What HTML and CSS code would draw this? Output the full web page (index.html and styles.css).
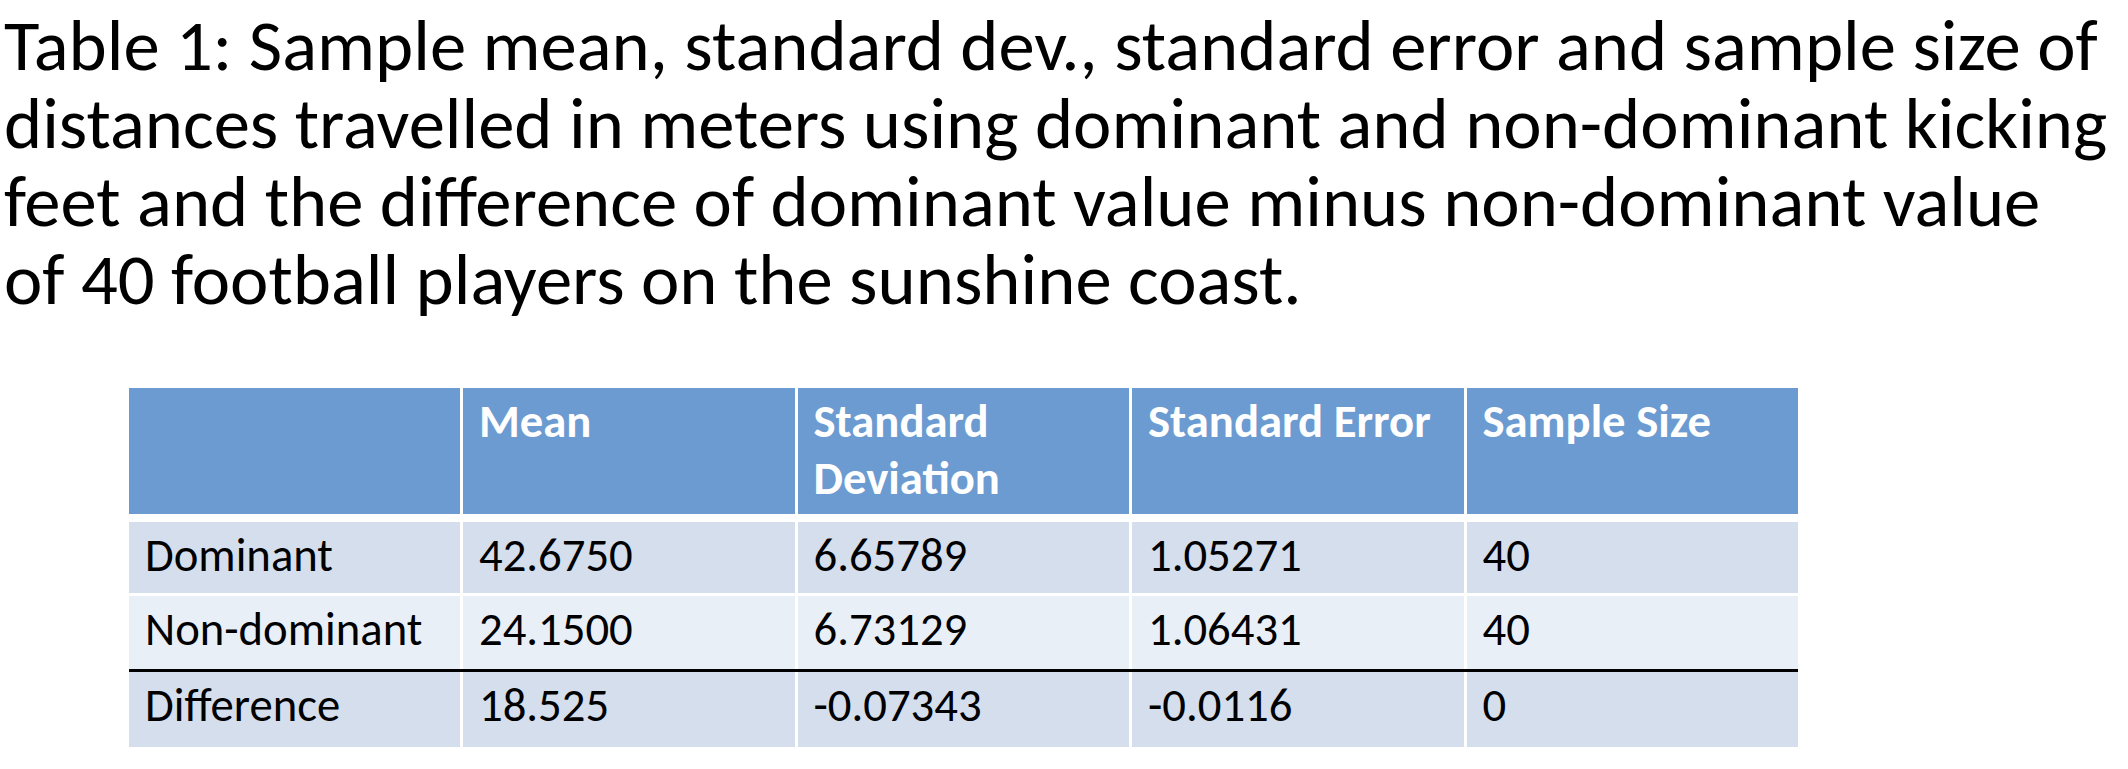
FILE: index.html
```html
<!DOCTYPE html>
<html lang="en">
<head>
<meta charset="utf-8">
<title>Table 1</title>
<link rel="stylesheet" href="styles.css">
</head>
<body>
<main class="slide">
  <p class="caption">Table 1: Sample mean, standard dev., standard error and sample size of<br>distances travelled in meters using dominant and non-dominant kicking<br>feet and the difference of dominant value minus non-dominant value<br>of 40 football players on the sunshine coast.</p>

  <div class="stats" role="table">
    <div class="row head" role="row">
      <div class="cell" role="columnheader"></div>
      <div class="cell" role="columnheader">Mean</div>
      <div class="cell" role="columnheader">Standard Deviation</div>
      <div class="cell" role="columnheader">Standard Error</div>
      <div class="cell" role="columnheader">Sample Size</div>
    </div>
    <div class="row band1 r1" role="row">
      <div class="cell" role="cell">Dominant</div>
      <div class="cell" role="cell">42.6750</div>
      <div class="cell" role="cell">6.65789</div>
      <div class="cell" role="cell">1.05271</div>
      <div class="cell" role="cell">40</div>
    </div>
    <div class="row band2 r2" role="row">
      <div class="cell" role="cell">Non-dominant</div>
      <div class="cell" role="cell">24.1500</div>
      <div class="cell" role="cell">6.73129</div>
      <div class="cell" role="cell">1.06431</div>
      <div class="cell" role="cell">40</div>
    </div>
    <div class="row band1 r3" role="row">
      <div class="cell" role="cell">Difference</div>
      <div class="cell" role="cell">18.525</div>
      <div class="cell" role="cell">-0.07343</div>
      <div class="cell" role="cell">-0.0116</div>
      <div class="cell" role="cell">0</div>
    </div>
  </div>
</main>
</body>
</html>
```

FILE: styles.css
```css
html, body {
  margin: 0;
  padding: 0;
  background: #ffffff;
}

body {
  font-family: Carlito, Calibri, "Liberation Sans Narrow", sans-serif;
  color: #000000;
}

.slide {
  width: 2128px;
  height: 769px;
  overflow: hidden;
}

.caption {
  margin: 0;
  padding: 7px 0 0 4px;
  font-size: 72.7px;
  line-height: 78px;
  white-space: nowrap;
}

.stats {
  width: 1669px;
  margin: 69px 0 0 129px;
  background: #ffffff;
}

.row {
  display: grid;
  grid-template-columns: 331px repeat(4, 1fr);
  column-gap: 3px;
}

.cell {
  padding: 5px 16px 0 16px;
  font-size: 46.7px;
  line-height: 57px;
  white-space: nowrap;
}

.head {
  height: 126px;
  margin-bottom: 8px;
}

.head .cell {
  background: #6c9bd1;
  color: #ffffff;
  font-weight: bold;
  white-space: normal;
}

.band1 .cell {
  background: #d4deec;
}

.band2 .cell {
  background: #e9eff7;
}

.r1 {
  height: 71px;
  margin-bottom: 3px;
}

.r2 {
  height: 73px;
}

.r3 {
  height: 75px;
  border-top: 3px solid #000000;
}
```
